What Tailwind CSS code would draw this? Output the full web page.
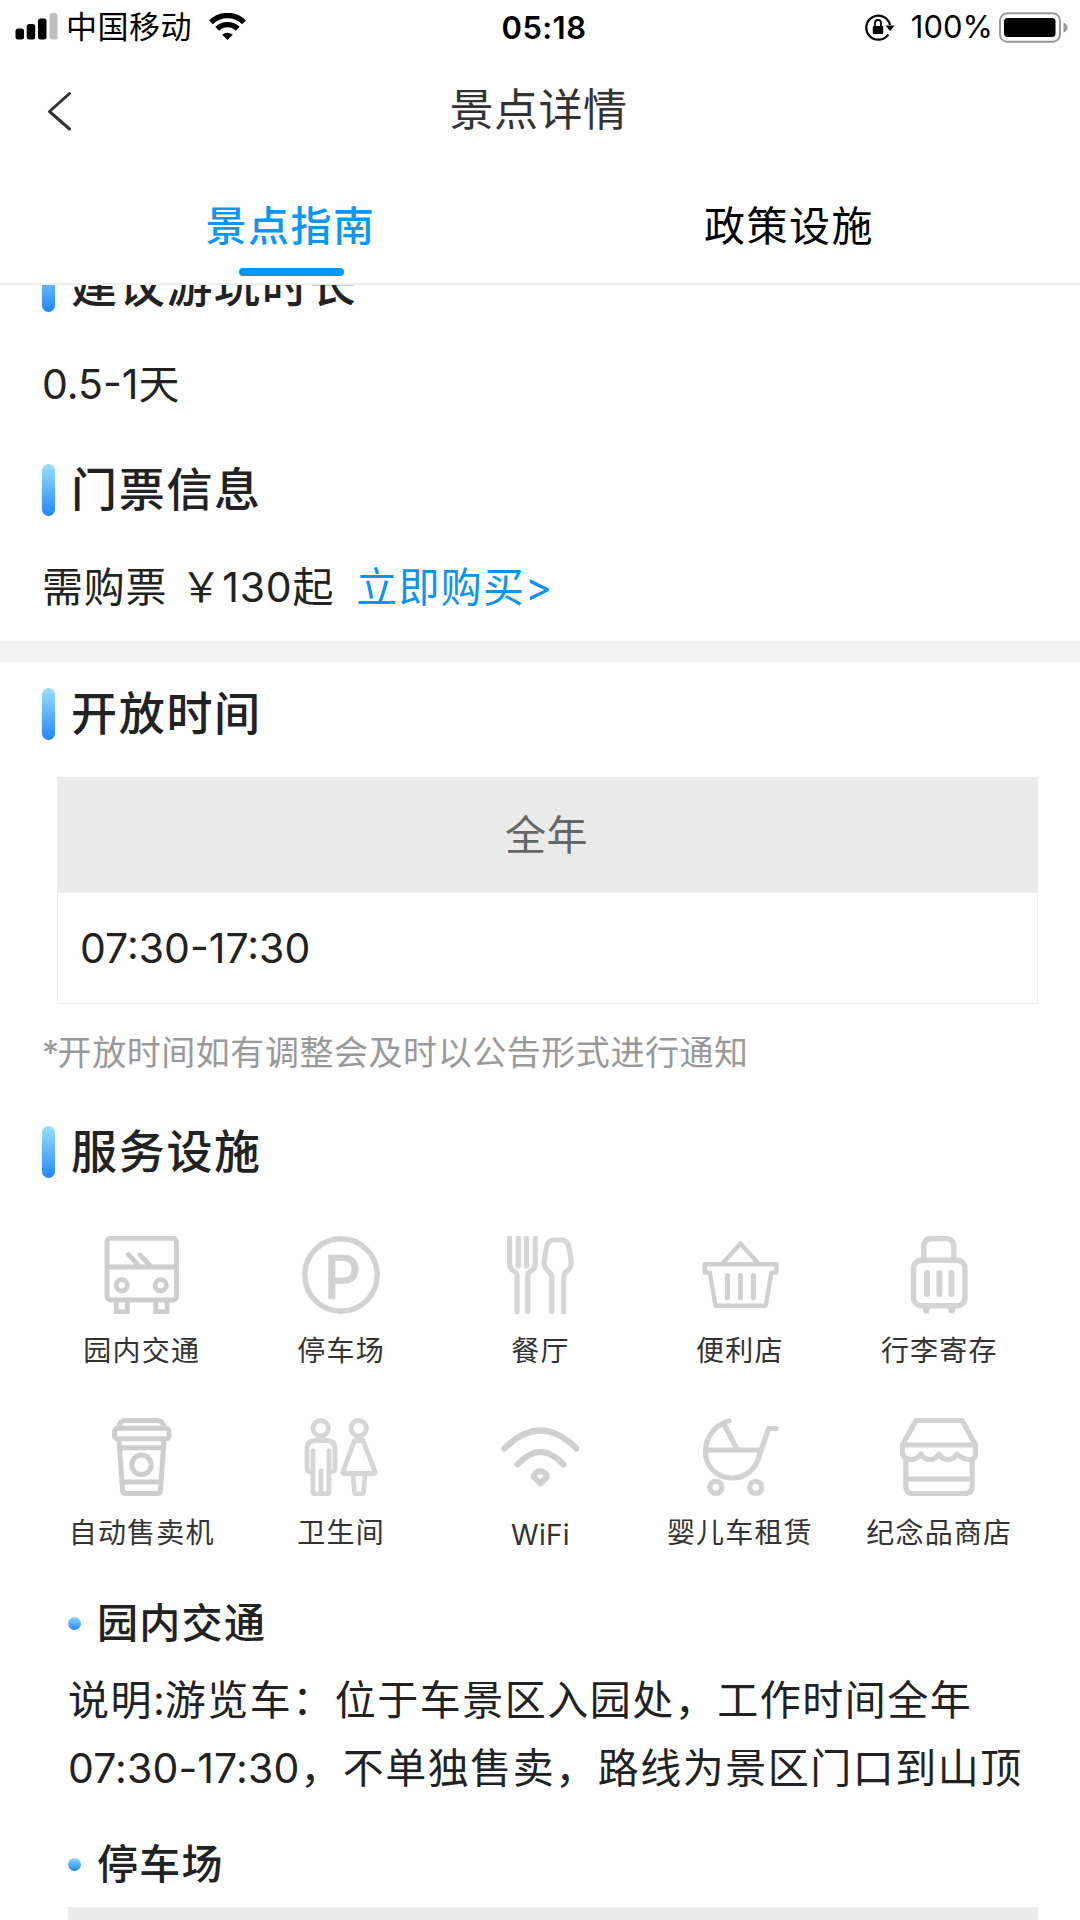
<!DOCTYPE html>
<html lang="zh-CN">
<head>
<meta charset="utf-8">
<title>景点详情</title>
<script src="https://cdn.jsdelivr.net/npm/@tailwindcss/browser@4"></script>
</head>
<body class="bg-[#fefefe] font-[Inter,'Noto_Sans_CJK_SC',sans-serif] text-[#222]">
<div class="flex h-[1920px] w-[1080px] flex-col overflow-hidden">

  <header class="shrink-0 border-b-2 border-[#f0f0f0]">
    <!-- status bar -->
    <div class="grid h-[54px] grid-cols-3 items-start text-black">
      <div class="flex h-[53px] items-center pl-[15px]">
        <svg class="h-[27px] w-[43px]" viewBox="0 0 43 27"><rect x=".5" y="15.500" width="8.500" height="11" rx="2.500"/><rect x="11.700" y="11" width="8.500" height="15.500" rx="2.500"/><rect x="23" y="5.500" width="8.500" height="21" rx="2.500"/><rect x="34.500" y="0" width="8" height="26.500" rx="2.500" fill="#bfbfbf"/></svg>
        <span class="ml-[8px] text-[31px] leading-[54px] tracking-[0.5px]">中国移动</span>
        <svg class="ml-[17px] h-[27px] w-[37px]" viewBox="0 0 37 27"><g fill="none" stroke="#000" stroke-width="5.400"><path d="M2 9.300a23.500 23.500 0 0 1 33 0"/><path d="M8.200 15.800a14.800 14.800 0 0 1 20.600 0"/></g><path d="M18.500 27l5.300-5.200a7.600 7.600 0 0 0-10.600 0z"/></svg>
      </div>
      <div class="pl-[8px] text-center text-[31px] leading-[55px] font-semibold tracking-[0.4px]">05:18</div>
      <div class="flex h-[54px] items-center justify-end pr-[12px]">
        <svg class="h-[28px] w-[30px]" viewBox="0 0 30 28"><path d="M23.300 21.300A12 12 0 1 1 25 12" fill="none" stroke="#000" stroke-width="2.200"/><path d="M20.500 12.500h9l-4.500 5.500z"/><path d="M10 13.500v-3.500a3 3 0 0 1 6 0v3.500" fill="none" stroke="#000" stroke-width="1.800"/><rect x="7.800" y="13" width="10.400" height="8" rx="1"/></svg>
        <span class="ml-[16px] text-[31px] leading-[56px]">100%</span>
        <svg class="ml-[6px] h-[31px] w-[69px]" viewBox="0 0 69 31"><rect x="1" y="1.200" width="60" height="28.600" rx="7.500" fill="none" stroke="#999" stroke-width="2"/><rect x="5" y="6" width="51.500" height="19" rx="3.500"/><path d="M64.500 10.500q4 1.500 4 5t-4 5z" fill="#999"/></svg>
      </div>
    </div>
    <!-- title bar -->
    <div class="grid h-[110px] grid-cols-[1fr_auto_1fr] items-center">
      <svg class="mt-[2px] ml-[46px] h-[40px] w-[28px]" viewBox="0 0 28 40" fill="none" stroke="#333" stroke-width="3" stroke-linecap="round" stroke-linejoin="round"><path d="M23.500 2.500L3.500 20.500l20 17.500"/></svg>
      <h1 class="pt-[1px] pr-[3px] text-[44px] leading-[110px] tracking-[0.5px] text-[#333]">景点详情</h1>
    </div>
    <!-- tabs -->
    <nav class="grid h-[119px] grid-cols-2 px-[41px] text-center text-[41px] tracking-[1.500px]">
      <div class="flex flex-col items-center">
        <span class="h-[104px] leading-[124px] font-medium text-[#0b97f5]">景点指南</span>
        <span class="ml-[2px] h-[8px] w-[105px] rounded-full bg-[#0598fa]"></span>
      </div>
      <div class="pr-[1px] leading-[124px] text-black">政策设施</div>
    </nav>
  </header>

  <main class="min-h-0 flex-1 overflow-hidden">
    <div class="-mt-[38px]">
      <div class="flex h-[77px] items-center gap-[16px] pl-[42px]">
        <i class="h-[52px] w-[13px] rounded-full bg-linear-to-b from-[#98e0ff] to-[#1a86f3]"></i>
        <h2 class="-mt-[2px] text-[46px] leading-none font-medium tracking-[1.700px]">建议游玩时长</h2>
      </div>
      <p class="h-[120px] pl-[42px] text-[41px] leading-[120px]">0.5-1天</p>

      <div class="flex h-[92px] items-center gap-[16px] pl-[42px]">
        <i class="h-[52px] w-[13px] rounded-full bg-linear-to-b from-[#98e0ff] to-[#1a86f3]"></i>
        <h2 class="-mt-[2px] text-[46px] leading-none font-medium tracking-[1.700px]">门票信息</h2>
      </div>
      <p class="flex h-[105px] pl-[42px] text-[41px] leading-[103px] tracking-[0.800px]">
        <span>需购票</span><span class="ml-[13px]">￥</span><span>130</span><span>起</span>
        <a class="ml-[22px] tracking-[1.200px] text-[#0b94f0]">立即购买&gt;</a>
      </p>

      <div class="h-[21px] bg-[#f2f2f2]"></div>

      <div class="flex h-[104px] items-center gap-[16px] pl-[42px]">
        <i class="h-[52px] w-[13px] rounded-full bg-linear-to-b from-[#98e0ff] to-[#1a86f3]"></i>
        <h2 class="-mt-[2px] text-[46px] leading-none font-medium tracking-[1.700px]">开放时间</h2>
      </div>
      <div class="mt-[11px] mr-[42px] ml-[57px] h-[227px] border border-[#ededed]">
        <div class="h-[115px] bg-[#ebebeb] text-center text-[41px] leading-[115px] tracking-[0.5px] text-[#666]"><span class="mr-[2px]">全年</span></div>
        <div class="h-[110px] pl-[22px] text-[41px] leading-[111px]">07:30-17:30</div>
      </div>
      <p class="h-[97px] pl-[42px] text-[34px] leading-[98px] tracking-[0.550px] text-[#999]"><span class="-mr-[2px]">*</span>开放时间如有调整会及时以公告形式进行通知</p>

      <div class="flex h-[102px] items-center gap-[16px] pl-[42px]">
        <i class="h-[52px] w-[13px] rounded-full bg-linear-to-b from-[#98e0ff] to-[#1a86f3]"></i>
        <h2 class="-mt-[2px] text-[46px] leading-none font-medium tracking-[1.700px]">服务设施</h2>
      </div>

      <!-- facilities -->
      <ul class="mr-[41px] ml-[42px] mt-[33px] grid grid-cols-5 gap-y-[45px] text-[28px] leading-[49px] tracking-[1.200px] text-[#333]">
        <li class="flex h-[137px] flex-col items-center gap-[13px]">
          <svg class="size-[78px] shrink-0" viewBox="0 0 78 78" fill="none" stroke="#cecece" stroke-width="4.800" stroke-linecap="round"><rect x="4" y="2.300" width="69.500" height="61.700" rx="3.500"/><path d="M4 31h69.500M25.500 18.500l11 12M37 19l11 11.500M13.200 64v11.700h11.200V64M52.800 64v11.700h11.200V64"/><circle cx="18.700" cy="49.300" r="5.600"/><circle cx="57.700" cy="49.300" r="5.600"/></svg>
          <span>园内交通</span>
        </li>
        <li class="flex h-[137px] flex-col items-center gap-[13px]">
          <svg class="size-[78px] shrink-0" viewBox="0 0 78 78"><circle cx="39" cy="39" r="36.200" fill="none" stroke="#d2d2d2" stroke-width="5.400"/><text x="22" y="62.500" font-size="60" letter-spacing="0" font-weight="500" fill="#d2d2d2" stroke="#d2d2d2" stroke-width=".4" textLength="37" lengthAdjust="spacingAndGlyphs">P</text></svg>
          <span>停车场</span>
        </li>
        <li class="flex h-[137px] flex-col items-center gap-[13px]">
          <svg class="size-[78px] shrink-0" viewBox="0 0 78 78" fill="none" stroke="#d6d6d6" stroke-width="5.200" stroke-linecap="round" stroke-linejoin="round"><path d="M8.600 2v26c0 4 2 6 5 7.500 2 1 2.500 2.500 2.500 5V76M34.200 2v26c0 4-2 6-5 7.500-2 1-2.500 2.500-2.500 5V76M17.300 2v28M25.500 2v28"/><path d="M50.700 76V41c0-2-.8-3.500-2.500-5-2.500-2-5-5-5-9 .2-7 1.500-13 3-18 1-3.500 4-5 7-5h7c3 0 6 1.500 7 5 1.500 5 2.800 11 3 18 0 4-2.500 7-5 9-1.700 1.500-2.500 3-2.500 5v35"/></svg>
          <span>餐厅</span>
        </li>
        <li class="flex h-[137px] flex-col items-center gap-[13px]">
          <svg class="size-[78px] shrink-0" viewBox="0 0 78 78" fill="none" stroke="#cfd0d2" stroke-width="4.400" stroke-linejoin="round"><path d="M22 27L39.400 7.500 57 27M8.500 36.500H3.700V28.200h71.800v8.300h-4.800"/><path d="M8.500 35l6 34.700h50.200l6-34.700"/><path d="M26.400 39.500v22.300M39.400 39.500v22.300M52.400 39.500v22.300" stroke-width="5" stroke-linecap="round"/></svg>
          <span>便利店</span>
        </li>
        <li class="flex h-[137px] flex-col items-center gap-[13px]">
          <svg class="size-[78px] shrink-0" viewBox="0 0 78 78" fill="none" stroke="#d4d4d4" stroke-width="5.400"><rect x="13.500" y="24.300" width="51.500" height="45.500" rx="8"/><path d="M23.800 23V11q0-8.500 8.500-8.500h13q8.500 0 8.500 8.500v12"/><path d="M27 37v21M39.400 37v21M51.400 37v21" stroke-width="6" stroke-linecap="round"/><path d="M22 71h8.500l-2 6.500h-4.500zM47.500 71H56l-2 6.500h-4.500z" fill="#d2d2d2" stroke="none"/></svg>
          <span>行李寄存</span>
        </li>
        <li class="flex h-[137px] flex-col items-center gap-[13px]">
          <svg class="size-[78px] shrink-0" viewBox="0 0 78 78" fill="none" stroke="#cecece" stroke-width="5" stroke-linejoin="round"><path d="M16 10q.5-7.500 6-7.500h32.500q5.500 0 6.500 7.500"/><rect x="11.500" y="10.300" width="54.500" height="10.500" rx="3"/><path d="M16 22l3.500 50q.3 3.600 4 3.600h30q3.700 0 4-3.600L61 22M16.500 29.800h44M19 64h39.500"/><circle cx="38.500" cy="46.800" r="9.700"/></svg>
          <span>自动售卖机</span>
        </li>
        <li class="flex h-[137px] flex-col items-center gap-[13px]">
          <svg class="size-[78px] shrink-0" viewBox="0 0 78 78" fill="none" stroke="#d6d6d6" stroke-width="4.800" stroke-linejoin="round" stroke-linecap="round"><circle cx="18.700" cy="10.300" r="7.800"/><path d="M11 33v40q0 2.800 2.800 2.800h10.400q2.800 0 2.800-2.800V33M11 53.500H8q-3 0-3-3V31q0-8.500 8.500-8.500h11q8.500 0 8.500 8.500v19.500q0 3-3 3h-3M19 53v22"/><circle cx="56.700" cy="10.300" r="7.800"/><path d="M52.500 22.500h8.500L73 53.500q.6 2-1.500 2H42.500q-2.100 0-1.500-2zM51 57l1.500 17q.2 1.800 2 1.800h5q1.800 0 2-1.800L63 57"/></svg>
          <span>卫生间</span>
        </li>
        <li class="flex h-[137px] flex-col items-center gap-[13px]">
          <svg class="size-[78px] shrink-0" viewBox="0 0 78 78" fill="none" stroke="#d0d0d0" stroke-width="6" stroke-linecap="round"><path d="M3.300 30.500q36-36 72.200 0M16.500 46.500q23-25 46 0"/><path d="M39.300 65.500l-6.500-6.500a6.500 5.800 0 1 1 13 0z" stroke-linejoin="round"/></svg>
          <span class="pt-[2px] tracking-[0.3px]">WiFi</span>
        </li>
        <li class="flex h-[137px] flex-col items-center gap-[13px]">
          <svg class="size-[78px] shrink-0" viewBox="0 0 78 78" fill="none" stroke="#d2d2d2" stroke-width="5.200" stroke-linecap="round" stroke-linejoin="round"><path d="M28 2.800C13.500 7 4.500 19 4.500 34c0 14.500 11.500 26 26.500 26 14 0 24-9 27.500-23L67.500 10.500h7.500M5 32h53.500M23 6l13 25.500"/><circle cx="14.800" cy="69.300" r="6"/><circle cx="54.700" cy="69.300" r="6"/></svg>
          <span>婴儿车租赁</span>
        </li>
        <li class="flex h-[137px] flex-col items-center gap-[13px]">
          <svg class="size-[78px] shrink-0" viewBox="0 0 78 78" fill="none" stroke="#d2d2d2" stroke-width="5.200" stroke-linejoin="round"><path d="M16 2.500h46L75.700 27v8q0 6.500-6.500 6.500T57 36q-3 5.500-9 5.500T39 36q-3 5.500-9 5.500T21 36q-3 5.500-10 5.500T2.300 35v-8zM2.300 27h73.400M5.800 41v27q0 7.600 7.600 7.600h51.200q7.600 0 7.600-7.600V41M5.800 61h66.400"/></svg>
          <span>纪念品商店</span>
        </li>
      </ul>

      <div class="mt-[35px] flex h-[66px] items-center gap-[16px] pl-[68px]">
        <i class="size-[13px] rounded-full bg-linear-to-b from-[#8ad8ff] to-[#1a86f3]"></i>
        <h3 class="text-[41px] leading-none font-medium tracking-[1.300px]">园内交通</h3>
      </div>
      <p class="mt-[10px] pl-[68px] text-[41px] leading-[68px] tracking-[1.500px] whitespace-nowrap">说明<span class="tracking-normal">:</span>游览车：位于车景区入园处，工作时间全年<br><span class="mr-[1px] tracking-[0.1px]">07:30-17:30</span>，不单独售卖，路线为景区门口到山顶</p>
      <div class="mt-[29px] flex h-[66px] items-center gap-[16px] pl-[68px]">
        <i class="size-[13px] rounded-full bg-linear-to-b from-[#8ad8ff] to-[#1a86f3]"></i>
        <h3 class="text-[41px] leading-none font-medium tracking-[1.300px]">停车场</h3>
      </div>
      <div class="mt-[10px] mr-[42px] ml-[68px] h-[40px] bg-[#ebebeb]"></div>
    </div>
  </main>
</div>
</body>
</html>
